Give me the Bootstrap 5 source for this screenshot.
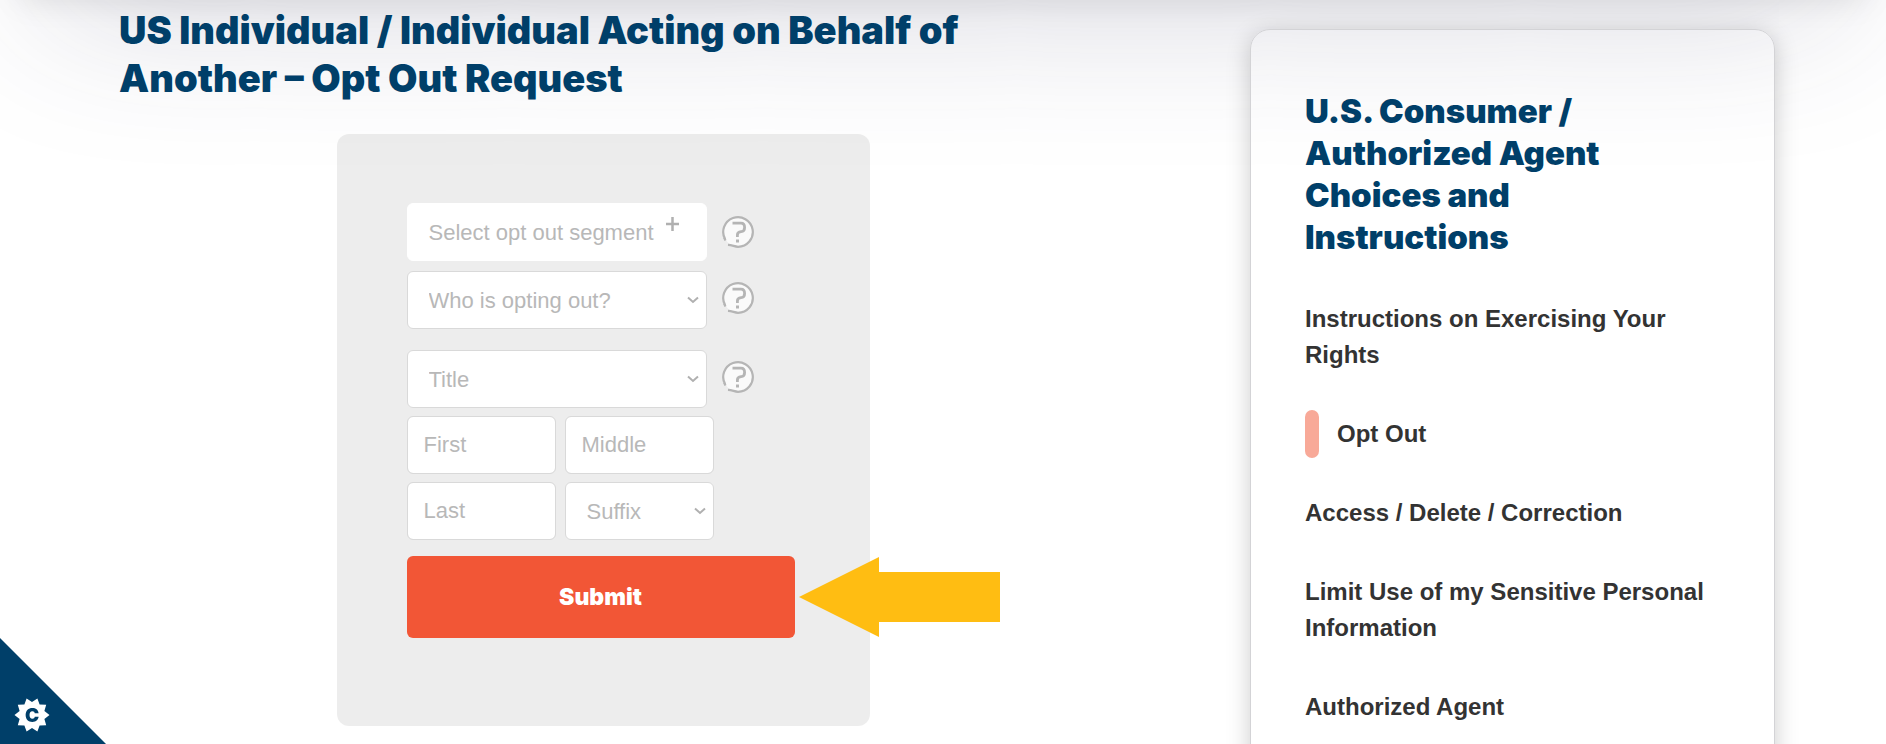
<!DOCTYPE html>
<html lang="en">
<head>
<meta charset="utf-8">
<meta name="viewport" content="width=device-width, initial-scale=1">
<title>Opt Out Request</title>
<link href="https://cdn.jsdelivr.net/npm/bootstrap@5.3.0/dist/css/bootstrap.min.css" rel="stylesheet">
<style>
  :root { --navy: #003f69; --field-text: #b8b8b8; --field-line: #d9d9d9; }
  body { font-family: "Liberation Sans", Arial, sans-serif; color: #333; background: #fff; }
  .top-shade {
    position: absolute; left: 0; right: 0; top: -300px; height: 300px; pointer-events: none; z-index: -1;
    box-shadow: 0 55px 160px -50px rgba(50, 50, 93, .22), 0 20px 30px -20px rgba(0, 0, 0, .1);
  }
  .page-grid { display: grid; grid-template-columns: minmax(0, 1fr); gap: 48px; padding: 6px 24px 0; }
  @media (min-width: 1400px) {
    .page-grid { grid-template-columns: minmax(0, 1fr) 525px; gap: 163px; padding: 6px 111px 0 119px; }
  }
  .page-title, .side-title { font-family: Inter, "Liberation Sans", sans-serif; font-weight: 900; color: var(--navy); }
  .page-title { max-width: 900px; font-size: 38px; line-height: 48px; margin-bottom: 32px; }
  .side-title { max-width: 330px; font-size: 33px; line-height: 42px; margin-bottom: 43px; }

  .form-panel { max-width: 533px; padding: 69px 75px 88px 70px; background: rgba(0, 0, 0, .07); border-radius: 12px; }
  .field, .field:focus {
    height: 58px; font-size: 22px; color: var(--field-text); background-color: #fff;
    border: 1px solid var(--field-line); border-radius: 6px; padding: 0 16px;
  }
  .field::placeholder { color: var(--field-text); opacity: 1; }
  .field-wide { width: 300px; }
  .field-half { width: 149px; }
  .segment { border-color: #fff; text-align: left; padding-left: 21px; }
  select.field {
    padding-left: 21px;
    background-image: url("data:image/svg+xml,%3csvg xmlns='http://www.w3.org/2000/svg' viewBox='0 0 12 8'%3e%3cpath fill='none' stroke='%23b0b0b0' stroke-width='2' d='M1 1.5l5 4.5 5-4.5'/%3e%3c/svg%3e");
    background-size: 12px 8px; background-position: right 7px center;
  }
  .help-btn { width: 32px; height: 32px; padding: 0; border: 0; background: none; line-height: 0; margin-left: 15px; }
  .submit-btn, .submit-btn:hover {
    height: 82px; font-family: Inter, "Liberation Sans", sans-serif; font-size: 23px; font-weight: 900;
    color: #fff; background: #f25636; border: 0; border-radius: 6px;
  }
  .pointer-arrow { position: absolute; left: 100%; top: 1px; margin-left: 4px; }

  .side-panel {
    margin-top: 23px; padding: 60px 54px 54px; border: 1px solid #d3d3d6; border-radius: 20px;
    box-shadow: 0 5px 25px rgba(0, 0, 0, .2);
  }
  .side-links { gap: 43px; font-size: 24px; line-height: 36px; font-weight: 700; }
  .side-links a { color: #333; text-decoration: none; }
  .current-bar { width: 14px; height: 48px; margin: -6px 0; border-radius: 7px; background: #f8a998; }

  .corner { position: fixed; left: 0; bottom: 0; line-height: 0; }
</style>
</head>
<body>
<div class="top-shade"></div>
<div class="page-grid">
  <main>
    <h1 class="page-title">US Individual / Individual Acting on Behalf of Another – Opt Out Request</h1>
    <form class="form-panel mx-auto d-flex flex-column">
      <div class="d-flex align-items-center">
        <button type="button" class="field field-wide segment d-flex align-items-center">Select opt out segment
          <svg class="mb-3" style="margin-left:12px" width="13" height="14" viewBox="0 0 13 14" aria-hidden="true"><path d="M6.500 0v14M0 7h13" stroke="#b0b0b0" stroke-width="2.500"/></svg>
        </button>
        <button type="button" class="help-btn" aria-label="Help: segment"><svg width="32" height="32"><use href="#help"/></svg></button>
      </div>
      <div class="d-flex align-items-center" style="margin-top:10px">
        <select class="form-select field field-wide" aria-label="Who is opting out?"><option>Who is opting out?</option></select>
        <button type="button" class="help-btn mb-1" aria-label="Help: who is opting out"><svg width="32" height="32"><use href="#help"/></svg></button>
      </div>
      <div class="d-flex align-items-center" style="margin-top:21px">
        <select class="form-select field field-wide" aria-label="Title"><option>Title</option></select>
        <button type="button" class="help-btn mb-1" aria-label="Help: title"><svg width="32" height="32"><use href="#help"/></svg></button>
      </div>
      <div class="d-flex mt-2" style="column-gap:9px">
        <input class="form-control field field-half" type="text" placeholder="First" aria-label="First name">
        <input class="form-control field field-half" type="text" placeholder="Middle" aria-label="Middle name">
      </div>
      <div class="d-flex mt-2" style="column-gap:9px">
        <input class="form-control field field-half" type="text" placeholder="Last" aria-label="Last name">
        <select class="form-select field field-half" aria-label="Suffix"><option>Suffix</option></select>
      </div>
      <div class="position-relative mt-3">
        <button type="submit" class="btn submit-btn w-100 d-block">Submit</button>
        <svg class="pointer-arrow" width="201" height="80" viewBox="0 0 201 80" aria-hidden="true"><path fill="#ffbd12" d="M0 40L80 0v15h121v50H80v15z"/></svg>
      </div>
    </form>
  </main>
  <aside>
    <div class="side-panel">
      <h2 class="side-title">U.S. Consumer / Authorized Agent Choices and Instructions</h2>
      <nav class="side-links d-flex flex-column" aria-label="Choices">
        <a href="#">Instructions on Exercising Your Rights</a>
        <a href="#" class="d-flex align-items-center" aria-current="page"><span class="current-bar"></span><span style="margin-left:18px">Opt Out</span></a>
        <a href="#">Access / Delete / Correction</a>
        <a href="#">Limit Use of my Sensitive Personal Information</a>
        <a href="#">Authorized Agent</a>
      </nav>
    </div>
  </aside>
</div>
<a class="corner" href="#" aria-label="Cookie settings">
  <svg width="106" height="106" viewBox="0 0 106 106">
    <path fill="#003f69" d="M0 0l106 106H0z"/>
    <g transform="translate(32 77)">
      <path fill="#fff" d="M17.500 0L12.400 4 14.200 10.300 7.600 10.500 5.400 16.600 0 13-5.400 16.600-7.600 10.500-14.200 10.300-12.400 4-17.500 0-12.400-4-14.200-10.300-7.600-10.500-5.400-16.600 0-13 5.400-16.600 7.600-10.500 14.200-10.300 12.400-4z"/>
      <text y="7" text-anchor="middle" font-family="Inter, sans-serif" font-weight="900" font-size="19" fill="#003f69">C</text>
    </g>
  </svg>
</a>
<svg width="0" height="0" class="position-absolute" aria-hidden="true">
  <symbol id="help" viewBox="0 0 32 32">
    <circle cx="16" cy="16" r="14.500" fill="#fafafa"/>
    <path fill="none" stroke="#b5b5b5" stroke-width="2.200" d="M3.200 23.400A14.800 14.800 0 1 1 16 30.800C12.500 30.500 10 29 6 28.800M3.500 24.500L2 21.500"/>
    <path fill="none" stroke="#b5b5b5" stroke-width="2.800" d="M10.500 7.200H19c2.300 0 3.600 1.500 3.600 4.200 0 3-1.300 4-3.500 4.300-2.600.3-3.700 1.100-3.700 3.300v2"/>
    <rect x="14" y="23.500" width="3" height="3" fill="#b5b5b5"/>
  </symbol>
</svg>
<script src="https://cdn.jsdelivr.net/npm/bootstrap@5.3.0/dist/js/bootstrap.bundle.min.js"></script>
</body>
</html>
